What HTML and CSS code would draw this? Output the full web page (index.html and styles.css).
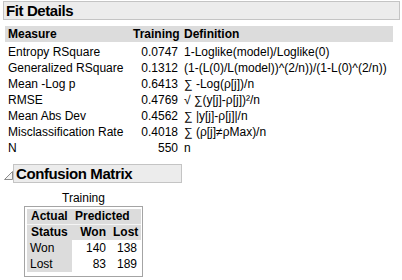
FILE: index.html
```html
<!DOCTYPE html>
<html lang="en">
<head>
  <meta charset="UTF-8">
  <title>Fit Details</title>
  <link rel="stylesheet" href="styles.css">
</head>
<body>

  <div class="outline">
    <div class="outline-head">
      <span class="outline-title">Fit Details</span>
    </div>
    <table class="report">
      <colgroup>
        <col class="col-measure">
        <col class="col-training">
        <col class="col-definition">
      </colgroup>
      <thead>
        <tr><th>Measure</th><th class="num">Training</th><th>Definition</th></tr>
      </thead>
      <tbody>
        <tr><td>Entropy RSquare</td><td class="num">0.0747</td><td>1-Loglike(model)/Loglike(0)</td></tr>
        <tr><td>Generalized RSquare</td><td class="num">0.1312</td><td>(1-(L(0)/L(model))^(2/n))/(1-L(0)^(2/n))</td></tr>
        <tr><td>Mean -Log p</td><td class="num">0.6413</td><td>∑ -Log(ρ[j])/n</td></tr>
        <tr><td>RMSE</td><td class="num">0.4769</td><td>√ ∑(y[j]-ρ[j])²/n</td></tr>
        <tr><td>Mean Abs Dev</td><td class="num">0.4562</td><td>∑ |y[j]-ρ[j]|/n</td></tr>
        <tr><td>Misclassification Rate</td><td class="num">0.4018</td><td>∑ (ρ[j]≠ρMax)/n</td></tr>
        <tr><td>N</td><td class="num">550</td><td>n</td></tr>
      </tbody>
    </table>
  </div>

  <div class="outline sub">
    <div class="sub-row">
      <svg class="toggle" width="9" height="9" viewBox="0 0 9 9">
        <polygon points="0.5,8.5 8.5,0.5 8.5,8.5" fill="#f4f4f4" stroke="#8c8c8c" stroke-width="1"/>
      </svg>
      <div class="outline-head">
        <span class="outline-title">Confusion Matrix</span>
      </div>
    </div>
    <div class="matrix">
      <div class="matrix-caption">Training</div>
      <table class="cm">
        <colgroup>
          <col class="cm-col1">
          <col class="cm-col2">
          <col class="cm-col3">
        </colgroup>
        <tr class="cm-head"><th>Actual</th><th colspan="2">Predicted</th></tr>
        <tr class="cm-head cm-gap"><th>Status</th><th class="num">Won</th><th class="num">Lost</th></tr>
        <tr><th class="cm-label">Won</th><td class="num">140</td><td class="num">138</td></tr>
        <tr><th class="cm-label">Lost</th><td class="num">83</td><td class="num">189</td></tr>
      </table>
    </div>
  </div>

</body>
</html>
```

FILE: styles.css
```css
body {
  margin: 0;
  padding: 1px 2px 0 3px;
  background: #ffffff;
  color: #000000;
  font-family: "Liberation Sans", Arial, sans-serif;
  font-size: 12px;
}

.outline-head {
  height: 17px;
  background: #ececec;
  border: 1px solid #c4c4c4;
  display: flex;
  align-items: center;
  padding-left: 2px;
}

.outline-title {
  font-size: 15px;
  font-weight: bold;
  letter-spacing: -0.4px;
  line-height: 17px;
}

/* Fit Details table */
.report {
  border-collapse: collapse;
  table-layout: fixed;
  width: 388px;
  margin: 6px 0 0 2px;
}

.col-measure { width: 125px; }
.col-training { width: 51px; }
.col-definition { width: 212px; }

.report th {
  background: #dcdcdc;
  font-weight: bold;
  text-align: left;
  height: 16px;
  padding: 0 3px;
  border-bottom: 2px solid #ffffff;
  line-height: 16px;
}

.report td {
  height: 16px;
  padding: 0 3px;
  line-height: 16px;
  white-space: nowrap;
}

.report .num {
  text-align: right;
}

/* Confusion Matrix */
.sub {
  margin-top: 8px;
}

.sub-row {
  display: flex;
  align-items: center;
  width: 179px;
}

.toggle {
  margin: 4px 0 0 1px;
}

.sub-row .outline-head {
  flex: 1;
}

.matrix {
  display: inline-flex;
  flex-direction: column;
  align-items: center;
  margin: 8px 0 0 21px;
}

.matrix-caption {
  line-height: 14px;
  height: 14px;
}

.cm {
  border: 1px solid #a4a4a4;
  border-collapse: separate;
  border-spacing: 0;
  padding: 2px 1px 4px 2px;
  margin-top: 1px;
  table-layout: fixed;
  width: 119px;
}

.cm-col1 { width: 45px; }
.cm-col2 { width: 38px; }
.cm-col3 { width: 31px; }

.cm th, .cm td {
  height: 16px;
  line-height: 16px;
  padding: 0 4px 0 3px;
}

.cm-head th {
  height: 15px;
  line-height: 15px;
  background: #dcdcdc;
  font-weight: bold;
  text-align: left;
}

.cm-head th:first-child {
  padding-left: 4px;
}

.cm-head th.num {
  text-align: right;
}

.cm-gap th {
  border-top: 1px solid #f4f4f4;
}

.cm-label {
  background: #dcdcdc;
  font-weight: normal;
  text-align: left;
}

.cm td.num {
  text-align: right;
}
```
